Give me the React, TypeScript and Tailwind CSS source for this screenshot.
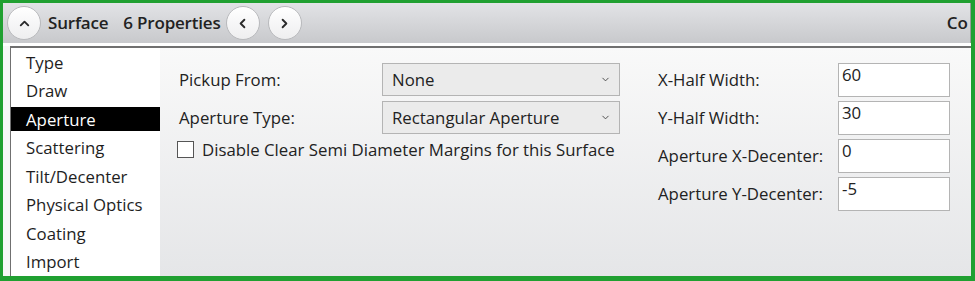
import { ChevronDown, ChevronLeft, ChevronRight, ChevronUp } from 'lucide-react'

const font = { fontFamily: '"Open Sans", "Noto Sans", sans-serif' }

const categories = [
  'Type',
  'Draw',
  'Aperture',
  'Scattering',
  'Tilt/Decenter',
  'Physical Optics',
  'Coating',
  'Import',
]

const values = [
  { label: 'X-Half Width:', value: '60' },
  { label: 'Y-Half Width:', value: '30' },
  { label: 'Aperture X-Decenter:', value: '0' },
  { label: 'Aperture Y-Decenter:', value: '-5' },
]

function RoundButton({ children }: { children: React.ReactNode }) {
  return (
    <div className="flex size-[34px] shrink-0 items-center justify-center rounded-full border border-[#b9babd] bg-gradient-to-b from-white to-[#eeeeef] text-[#2b2b2b]">
      {children}
    </div>
  )
}

function Select({ value }: { value: string }) {
  return (
    <div className="flex h-[33px] w-[238px] shrink-0 items-center justify-between border border-[#b4b4b4] bg-[#ebebeb] pl-[9px] pr-[8px] text-[#222]">
      <span>{value}</span>
      <ChevronDown size={11} strokeWidth={2} className="text-[#444]" />
    </div>
  )
}

export default function App() {
  return (
    <div
      style={font}
      className="flex h-[281px] w-[975px] flex-col overflow-hidden border-[3px] border-r-4 border-b-[5px] border-[#20a031] bg-[#f7f7f7]"
    >
      <header className="flex h-[40px] shrink-0 items-center bg-gradient-to-b from-[#e2e3e6] to-[#c8c9cc] pl-[4px] text-[#222]">
        <RoundButton>
          <ChevronUp size={15} strokeWidth={3} />
        </RoundButton>
        <span className="ml-[7px] text-[17px] font-semibold tracking-[-0.2px]">Surface</span>
        <span className="ml-[15px] text-[17px] font-semibold tracking-[-0.2px]">6 Properties</span>
        <div className="ml-[5px] flex gap-[8px]">
          <RoundButton>
            <ChevronLeft size={15} strokeWidth={3} />
          </RoundButton>
          <RoundButton>
            <ChevronRight size={15} strokeWidth={3} />
          </RoundButton>
        </div>
        <span className="ml-auto mr-[2px] text-[17px] font-semibold">Co</span>
        <div className="h-full w-px bg-[#9a9a9a]" />
      </header>
      <div className="h-[3px] shrink-0 bg-white" />
      <div className="flex min-h-0 flex-1 pl-[7px]">
        <div className="flex min-w-0 flex-1 border-l border-t-2 border-[#707070]">
          <ul className="flex w-[149px] shrink-0 flex-col bg-white text-[16.8px] text-[#1e1e1e]">
            {categories.map((c) => (
              <li key={c} className="flex h-[28.7px] items-center">
                <span
                  className={
                    c === 'Aperture'
                      ? 'flex h-[24px] w-full items-center bg-black pl-[15px] text-white'
                      : 'flex h-[24px] w-full items-center pl-[15px]'
                  }
                >
                  {c}
                </span>
              </li>
            ))}
          </ul>
          <main className="flex flex-1 gap-[38px] bg-gradient-to-b from-[#f9f9f9] to-[#e5e6e8] pl-[19px] pt-[15px] text-[16.8px] text-[#222]">
            <div className="flex w-[441px] shrink-0 flex-col">
              <div className="flex items-center justify-between">
                <span>Pickup From:</span>
                <Select value="None" />
              </div>
              <div className="mt-[5px] flex items-center justify-between">
                <span>Aperture Type:</span>
                <Select value="Rectangular Aperture" />
              </div>
              <label className="mt-[3px] flex items-center gap-[8px]">
                <span className="ml-[-2px] size-[17px] border border-[#555] bg-white" />
                <span>Disable Clear Semi Diameter Margins for this Surface</span>
              </label>
            </div>
            <div className="flex w-[292px] shrink-0 flex-col gap-[4px]">
              {values.map((v) => (
                <div key={v.label} className="flex items-center justify-between">
                  <span>{v.label}</span>
                  <div className="h-[34px] w-[112px] border border-[#b4b4b4] bg-white pl-[3px] leading-[22px]">
                    {v.value}
                  </div>
                </div>
              ))}
            </div>
          </main>
        </div>
      </div>
    </div>
  )
}
